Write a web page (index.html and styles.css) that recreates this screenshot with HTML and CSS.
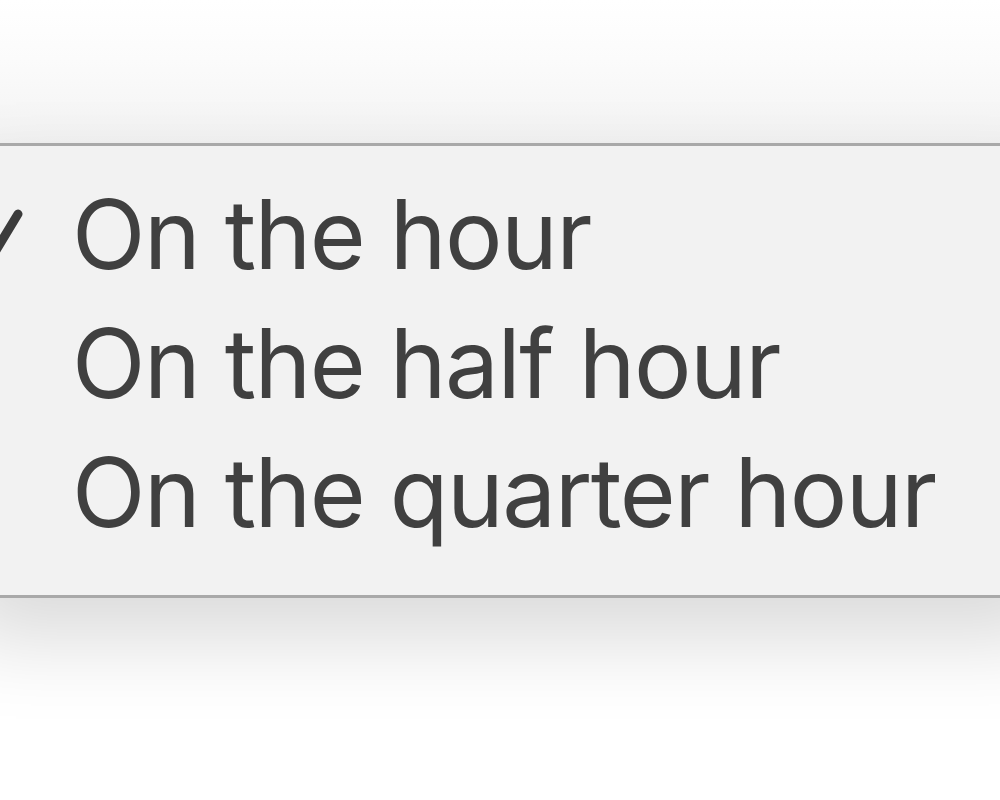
FILE: index.html
```html
<!DOCTYPE html>
<html lang="en">
  <head>
    <meta charset="UTF-8" />
    <title>Chime menu</title>
    <link rel="stylesheet" href="styles.css">
  </head>
  <body>
    <div class="stage">
      <ul class="menu">
        <li class="menu-item checked">
          <svg class="check" width="60" height="60" viewBox="0 0 60 60">
            <path d="M0 30 L15 48 L38 10" fill="none" stroke="#3c3c3c" stroke-width="9" stroke-linecap="round" stroke-linejoin="round"/>
          </svg>
          <span>On the hour</span>
        </li>
        <li class="menu-item"><span>On the half hour</span></li>
        <li class="menu-item"><span>On the quarter hour</span></li>
      </ul>
    </div>
  </body>
</html>
```

FILE: styles.css
```css
* {
  box-sizing: border-box;
}

body {
  margin: 0;
  padding: 0;
  background-color: #fff;
  overflow: hidden;
}

.stage {
  width: 1000px;
  height: 800px;
  padding-top: 143px;
  overflow: hidden;
  background: linear-gradient(#ffffff 0px, #fbfbfb 60px, #f3f3f3 143px, #ffffff 143px);
}

ul {
  list-style: none;
  margin: 0;
  padding: 0;
}

.menu {
  margin-left: -40px;
  width: 1100px;
  height: 455px;
  padding: 24px 0 0 112px;
  background-color: #f2f2f2;
  border-top: 3px solid #a9a9a9;
  border-bottom: 3px solid #a9a9a9;
  box-shadow: 0 40px 80px rgba(0, 0, 0, 0.15);
}

.menu-item {
  position: relative;
  height: 129px;
  line-height: 129px;
  font-family: Inter, "Noto Sans", sans-serif;
  font-size: 96px;
  letter-spacing: -1.5px;
  color: #404040;
  white-space: nowrap;
}

/* checkmark is cut by the left edge of the window */
.check {
  position: absolute;
  left: -92px;
  top: 34px;
}
```
